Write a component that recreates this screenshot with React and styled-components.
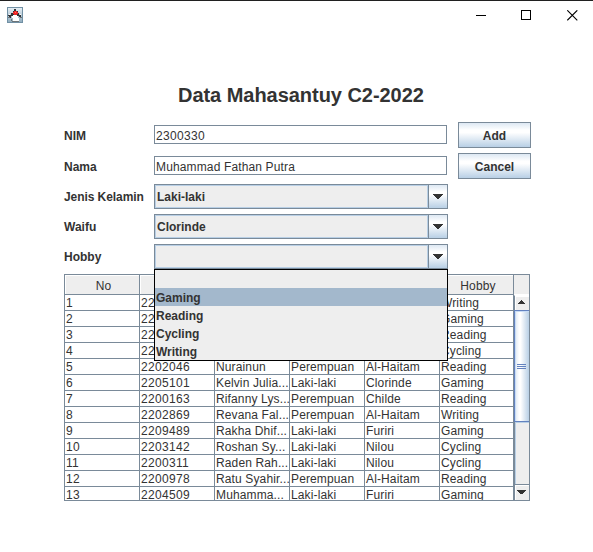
import React from 'react';
import styled, { createGlobalStyle } from 'styled-components';

const line = '#7a8a99';
const ink = '#333333';

const Global = createGlobalStyle`
  * { box-sizing: border-box; }
  body {
    margin: 0;
    background: #fff;
    color: ${ink};
    font: 12px/16px "Liberation Sans", Arial, sans-serif;
    overflow: hidden;
  }
`;

const Window = styled.main`
  width: 593px;
  height: 552px;
  border-top: 1px solid #202020;
  background: #fff;
`;

const TitleBar = styled.header`
  height: 30px;
  display: flex;
  justify-content: space-between;
  padding: 6px 0 0 7px;
`;

const Controls = styled.div`
  display: flex;
  gap: 35px;
  padding: 3px 15px 0 0;
`;

const Title = styled.h1`
  margin: 52px 0 0 178px;
  height: 24px;
  font-size: 20px;
  line-height: 24px;
  font-weight: bold;
  white-space: nowrap;
  letter-spacing: -0.04px;
`;

const Form = styled.form`
  display: flex;
  align-items: flex-start;
  gap: 10px;
  margin: 15px 0 0 64px;
`;

const Fields = styled.div`
  width: 384px;
  display: flex;
  flex-direction: column;
`;

const Field = styled.div`
  display: grid;
  grid-template-columns: 90px 294px;
  align-items: start;
  padding-top: ${({ $top }) => $top}px;
`;

const Label = styled.label`
  padding-top: ${({ $top = 5 }) => $top}px;
  font-weight: bold;
  white-space: nowrap;
  letter-spacing: ${({ $spacing = 0 }) => $spacing}px;
`;

const TextBox = styled.div`
  width: 293px;
  height: 19px;
  padding: 2px 0 0 1px;
  border: 1px solid ${line};
  line-height: 16px;
  letter-spacing: ${({ $spacing = 0 }) => $spacing}px;
`;

const Combo = styled.div`
  position: relative;
  display: grid;
  grid-template-columns: 1fr 19px;
  width: 294px;
  height: 25px;
  border: 1px solid ${line};
  font-weight: bold;
`;

const ComboValue = styled.div`
  height: 23px;
  border: 1px solid #b8cfe5;
  background: #eeeeee;
  padding-left: 1px;
  line-height: 22px;
`;

const ComboButton = styled.div`
  display: flex;
  align-items: center;
  justify-content: center;
  height: 23px;
  border-left: 1px solid ${line};
  background: linear-gradient(#dde8f3, #fff 30%, #fff 40%, #b8cfe5);
`;

const Popup = styled.div`
  position: absolute;
  z-index: 2;
  top: 24px;
  left: -1px;
  width: 294px;
  height: 92px;
  border: 1px solid #000;
  background: #eeeeee;
`;

const Option = styled.div`
  height: 18px;
  padding: 2px 0 0 1px;
  line-height: 16px;
  background: ${({ $selected }) => ($selected ? '#a3b8cc' : '#eeeeee')};
`;

const Actions = styled.div`
  display: flex;
  flex-direction: column;
  gap: 5px;
`;

const Button = styled.button`
  width: 73px;
  height: 26px;
  padding: 1px 0 0;
  border: 1px solid ${line};
  background: linear-gradient(#dde8f3, #fff 30%, #fff 40%, #b8cfe5);
  color: ${ink};
  font: bold 12px/16px "Liberation Sans", Arial, sans-serif;
`;

const TablePane = styled.section`
  display: grid;
  grid-template-columns: 449px 16px;
  width: 466px;
  height: 227px;
  margin: 5px 0 0 64px;
  border: 1px solid ${line};
  border-width: 1px 0 1px 1px;
  overflow: hidden;
`;

const Rows = styled.div`
  height: 225px;
  overflow: hidden;
`;

const Row = styled.div`
  display: grid;
  grid-template-columns: repeat(5, 75px) 74px;
  height: 16px;
`;

const HeaderRow = styled(Row)`
  height: 20px;
`;

const Cell = styled.div`
  padding: 2px 0 0 1px;
  border: 1px solid ${line};
  border-width: 0 1px 1px 0;
  white-space: pre;
  line-height: 13px;
  letter-spacing: ${({ $digits }) => ($digits ? 0.32 : 0.13)}px;
`;

const HeaderCell = styled(Cell)`
  padding: 3px 0 0 3px;
  text-align: center;
  line-height: 16px;
  background: #eeeeee;
  box-shadow: inset 1px 1px #fff;
`;

const Scroll = styled.div`
  display: grid;
  grid-template-rows: 20px 15px 112px 62px 16px;
  border-right: 1px solid ${line};
`;

const Corner = styled.div`
  background: #eeeeee;
  border-bottom: 1px solid #fff;
`;

const Arrow = styled.div`
  padding: ${({ $down }) => ($down ? '5px 0 0 2px' : '4px 0 0 2px')};
  line-height: 0;
  background: #eeeeee;
  border-left: 1px solid ${line};
  border-top: ${({ $down }) => ($down ? `1px solid ${line}` : '1px solid #fff')};
  box-shadow: inset 1px 1px #fff;
`;

const Thumb = styled.div`
  padding: 53px 0 0 2px;
  line-height: 0;
  border: 1px solid #6382bf;
  border-right: 0;
  background: linear-gradient(90deg, #dde8f3, #fff 30%, #fff 40%, #b8cfe5);
  box-shadow: inset 1px 1px #c8dcf5;
`;

const Track = styled.div`
  border-left: 1px solid ${line};
  background: #eeeeee;
  box-shadow: inset 1px 1px #b8cfe5;
`;

function JavaIcon() {
  return (
    <svg width="16" height="16" shapeRendering="crispEdges">
      <defs>
        <linearGradient id="sky" x2="0" y2="1">
          <stop stopColor="#e8f0f6" />
          <stop offset="1" stopColor="#8fabbd" />
        </linearGradient>
      </defs>
      <path fill="url(#sky)" stroke="#7190a4" d="M.5.5h15v15H.5z" />
      <path fill="#303438" d="M7 2h2v2h2v2h1v2h2v2h-2V9h-2V8H6v1H4v2H2V9H1V8h3V6h2V4h1z" />
      <path fill="#fff" d="M6 8h4v1h1v2h1v3H6v-3H5V9h1zM2 7h1v1H2zM13 7h1v1h-1z" />
      <path fill="#6d7477" d="M1 10h2v1H1zM13 10h2v1h-2zM5 14h7v1H5zM4 12h1v2H4z" />
      <path fill="#ed2525" d="M7 4h3v1h1v2h-1v1H7V7H6V5h1z" />
      <path fill="#ff6860" d="M8 5h1v1H8z" />
    </svg>
  );
}

function Triangle({ up, small }) {
  return small ? (
    <svg width="9" height="4" shapeRendering="crispEdges">
      <path fill={ink} d={up ? 'M4 0h1v1h1v1h1v1h1v1H1V3h1V2h1V1h1z' : 'M0 0h9v1H8v1H7v1H6v1H3V3H2V2H1V1H0z'} />
    </svg>
  ) : (
    <svg width="10" height="5" shapeRendering="crispEdges">
      <path fill={ink} d="M0 0h10v1H9v1H8v1H7v1H6v1H4V4H3V3H2V2H1V1H0z" />
    </svg>
  );
}

function ComboBox({ value, children }) {
  return (
    <Combo>
      <ComboValue>{value}</ComboValue>
      <ComboButton><Triangle /></ComboButton>
      {children}
    </Combo>
  );
}

const headers = ['No', '', '', '', '', 'Hobby'];
const rows = [
  ['1', '22', '', '', '', 'Writing'],
  ['2', '22', '', '', '', 'Gaming'],
  ['3', '22', '', '', '', 'Reading'],
  ['4', '22', '', '', '', 'Cycling'],
  ['5', '2202046', 'Nurainun', 'Perempuan', 'Al-Haitam', 'Reading'],
  ['6', '2205101', 'Kelvin Julia...', 'Laki-laki', 'Clorinde', 'Gaming'],
  ['7', '2200163', 'Rifanny Lys...', 'Perempuan', 'Childe', 'Reading'],
  ['8', '2202869', 'Revana Fal...', 'Perempuan', 'Al-Haitam', 'Writing'],
  ['9', '2209489', 'Rakha Dhif...', 'Laki-laki', 'Furiri', 'Gaming'],
  ['10', '2203142', 'Roshan Sy...', 'Laki-laki', 'Nilou', 'Cycling'],
  ['11', '2200311', 'Raden Rah...', 'Laki-laki', 'Nilou', 'Cycling'],
  ['12', '2200978', 'Ratu Syahir...', 'Perempuan', 'Al-Haitam', 'Reading'],
  ['13', '2204509', 'Muhamma...', 'Laki-laki', 'Furiri', 'Gaming'],
];

export default function App() {
  return (
    <Window>
      <Global />
      <TitleBar>
        <JavaIcon />
        <Controls>
          <svg width="11" height="11" shapeRendering="crispEdges"><path fill="#000" d="M1 5h10v1H1z" /></svg>
          <svg width="11" height="11" shapeRendering="crispEdges"><path fill="none" stroke="#000" d="M.5.5h9v9h-9z" /></svg>
          <svg width="11" height="11"><path stroke="#000" strokeWidth="1.1" d="M.3.3l10 10M10.3.3l-10 10" /></svg>
        </Controls>
      </TitleBar>
      <Title>Data Mahasantuy C2-2022</Title>
      <Form>
        <Fields>
          <Field $top={3}><Label $top={3}>NIM</Label><TextBox $spacing={0.33}>2300330</TextBox></Field>
          <Field $top={12}><Label $top={3}>Nama</Label><TextBox $spacing={0.14}>Muhammad Fathan Putra</TextBox></Field>
          <Field $top={9}><Label $spacing={-0.07}>Jenis Kelamin</Label><ComboBox value="Laki-laki" /></Field>
          <Field $top={5}><Label>Waifu</Label><ComboBox value="Clorinde" /></Field>
          <Field $top={5}>
            <Label>Hobby</Label>
            <ComboBox value="">
              <Popup>
                <Option />
                <Option $selected>Gaming</Option>
                <Option>Reading</Option>
                <Option>Cycling</Option>
                <Option>Writing</Option>
              </Popup>
            </ComboBox>
          </Field>
        </Fields>
        <Actions>
          <Button type="button">Add</Button>
          <Button type="button">Cancel</Button>
        </Actions>
      </Form>
      <TablePane>
        <Rows>
          <HeaderRow>{headers.map((h, i) => <HeaderCell key={i}>{h}</HeaderCell>)}</HeaderRow>
          {rows.map((row) => (
            <Row key={row[0]}>
              {row.map((text, i) => <Cell key={i} $digits={i < 2}>{text}</Cell>)}
            </Row>
          ))}
        </Rows>
        <Scroll>
          <Corner />
          <Arrow><Triangle small up /></Arrow>
          <Thumb>
            <svg width="9" height="5" shapeRendering="crispEdges"><path fill="#6382bf" d="M0 0h9v1H0zM0 2h9v1H0zM0 4h9v1H0z" /></svg>
          </Thumb>
          <Track />
          <Arrow $down><Triangle small /></Arrow>
        </Scroll>
      </TablePane>
    </Window>
  );
}
